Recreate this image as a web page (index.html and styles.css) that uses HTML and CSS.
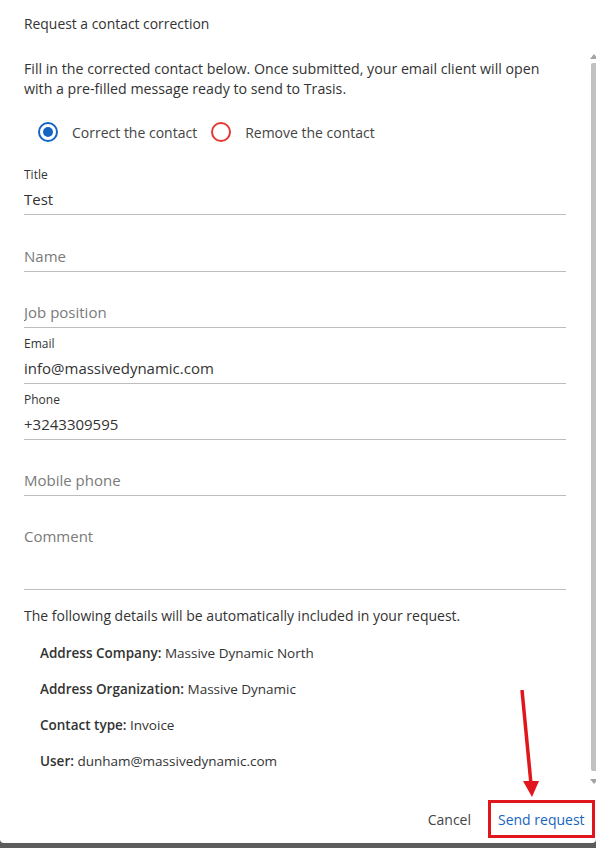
FILE: index.html
```html
<!DOCTYPE html>
<html lang="en">
<head>
<meta charset="utf-8">
<title>Request a contact correction</title>
<link rel="stylesheet" href="styles.css">
</head>
<body>
<div class="dialog">
  <h1 class="dialog-title">Request a contact correction</h1>
  <div class="dialog-body">
    <p class="intro">Fill in the corrected contact below. Once submitted, your email client will open with a pre-filled message ready to send to Trasis.</p>
    <div class="radio-row">
      <label class="radio">
        <span class="radio-circle radio-circle--checked"></span>
        <span class="radio-label">Correct the contact</span>
      </label>
      <label class="radio">
        <span class="radio-circle radio-circle--danger"></span>
        <span class="radio-label">Remove the contact</span>
      </label>
    </div>
    <div class="field field--first">
      <span class="field-label">Title</span>
      <input class="field-input" type="text" value="Test">
    </div>
    <div class="field field--second">
      <span class="field-label"></span>
      <input class="field-input" type="text" placeholder="Name">
    </div>
    <div class="field">
      <span class="field-label"></span>
      <input class="field-input" type="text" placeholder="Job position">
    </div>
    <div class="field">
      <span class="field-label">Email</span>
      <input class="field-input" type="text" value="info@massivedynamic.com">
    </div>
    <div class="field">
      <span class="field-label">Phone</span>
      <input class="field-input" type="text" value="+3243309595">
    </div>
    <div class="field">
      <span class="field-label"></span>
      <input class="field-input" type="text" placeholder="Mobile phone">
    </div>
    <div class="field field--comment">
      <span class="field-label"></span>
      <textarea class="field-input field-textarea" placeholder="Comment"></textarea>
    </div>
    <p class="details-intro">The following details will be automatically included in your request.</p>
    <ul class="details">
      <li><strong>Address Company:</strong> Massive Dynamic North</li>
      <li><strong>Address Organization:</strong> Massive Dynamic</li>
      <li><strong>Contact type:</strong> Invoice</li>
      <li><strong>User:</strong> dunham@massivedynamic.com</li>
    </ul>
  </div>
  <div class="dialog-actions">
    <button class="btn btn-cancel" type="button">Cancel</button>
    <button class="btn btn-primary" type="button">Send request</button>
  </div>
  <div class="scrollbar">
    <span class="scroll-up"></span>
    <span class="scroll-thumb"></span>
    <span class="scroll-down"></span>
  </div>
  <svg class="annotation-arrow" width="40" height="120" viewBox="0 0 40 120">
    <line x1="4" y1="0" x2="13" y2="94" stroke="#e0161c" stroke-width="3.5"/>
    <polygon points="5,91 21,91 14,107" fill="#e0161c"/>
  </svg>
</div>
</body>
</html>
```

FILE: styles.css
```css
* { box-sizing: border-box; }
html, body { margin: 0; padding: 0; }
body {
  background: #5c5c5c;
  font-family: "Open Sans", "Liberation Sans", Arial, sans-serif;
  color: #333;
  width: 596px;
  height: 848px;
  overflow: hidden;
}
.dialog {
  position: relative;
  background: #fff;
  width: 596px;
  height: 843px;
  border-radius: 0 0 4px 4px;
  display: flex;
  flex-direction: column;
}
.dialog-title {
  margin: 0;
  padding: 14px 24px 0;
  font-size: 13.9px;
  line-height: 20px;
  font-weight: normal;
  color: #333;
}
.dialog-body {
  padding: 0 30px 0 24px;
  flex: 1;
}
.intro {
  margin: 25px 0 0;
  font-size: 14.2px;
  line-height: 20px;
  color: #333;
}
.radio-row {
  display: flex;
  gap: 14px;
  margin-top: 19px;
  padding-left: 14px;
  height: 28px;
  align-items: center;
}
.radio {
  display: flex;
  align-items: center;
  gap: 14px;
}
.radio-circle {
  width: 20px;
  height: 20px;
  border-radius: 50%;
  border: 2px solid #1565c0;
  position: relative;
}
.radio-circle--checked::after {
  content: "";
  position: absolute;
  left: 3px;
  top: 3px;
  width: 10px;
  height: 10px;
  border-radius: 50%;
  background: #1565c0;
}
.radio-circle--danger { border-color: #e53935; }
.radio-label { font-size: 14px; color: #444; }
.field {
  height: 56px;
  padding-top: 8px;
  border-bottom: 1px solid #bdbdbd;
  display: flex;
  flex-direction: column;
}
.field--first {
  margin-top: 12px;
  height: 57px;
  padding-top: 9px;
}
.field--second { margin-top: 1px; }
.field-label {
  font-size: 12px;
  line-height: 16px;
  height: 16px;
  flex: none;
  color: #333;
}
.field-input {
  margin-top: 4px;
  height: 24px;
  flex: none;
  border: 0;
  padding: 0;
  outline: none;
  background: transparent;
  font-family: inherit;
  font-size: 15px;
  line-height: 24px;
  color: #333;
  width: 100%;
}
.field-input::placeholder { color: #7a7a7a; }
.field--comment { height: 94px; }
.field-textarea {
  resize: none;
  height: 50px;
}
.details-intro {
  margin: 16px 0 0;
  font-size: 14px;
  line-height: 20px;
}
.details {
  list-style: none;
  margin: 17px 0 0;
  padding: 0 0 0 16px;
  font-size: 13.5px;
  line-height: 20px;
  display: flex;
  flex-direction: column;
  gap: 16px;
}
.details strong { font-weight: 600; }
.dialog-actions {
  display: flex;
  justify-content: flex-end;
  align-items: center;
  gap: 9px;
  padding: 0 1px 5px 0;
}
.btn {
  font-family: inherit;
  font-size: 14px;
  background: transparent;
  border: 0;
  height: 38px;
  cursor: pointer;
  white-space: nowrap;
}
.btn-cancel { color: #444; padding: 0 8px; }
.btn-primary {
  color: #1565c0;
  border: 3px solid #e0161c;
  padding: 0 6px 0 7px;
  width: 107px;
  text-align: left;
}
.scrollbar {
  position: absolute;
  right: 0;
  top: 54px;
  width: 6px;
  height: 730px;
}
.scroll-up, .scroll-down {
  position: absolute;
  left: 0;
  width: 0; height: 0;
  border-left: 4px solid transparent;
  border-right: 4px solid transparent;
}
.scroll-up { top: 0; border-bottom: 5px solid #a3a3a3; }
.scroll-down { bottom: 0; border-top: 5px solid #a3a3a3; }
.scroll-thumb {
  position: absolute;
  left: 1px;
  top: 9px;
  width: 6px;
  height: 708px;
  background: #c1c1c1;
  border-radius: 2px 0 0 2px;
}
.annotation-arrow {
  position: absolute;
  left: 518px;
  top: 690px;
}
```
